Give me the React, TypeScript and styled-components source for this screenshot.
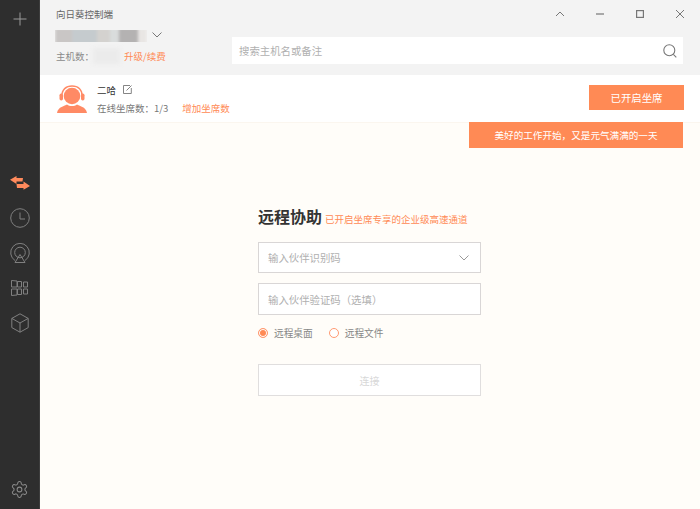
import React from "react";
import styled, { createGlobalStyle } from "styled-components";

const Global = createGlobalStyle`
  html, body { margin: 0; padding: 0; width: 700px; height: 509px; overflow: hidden; }
  body { font-family: "Noto Sans CJK SC", "Liberation Sans", sans-serif; }
  * { box-sizing: border-box; }
`;
const Shell = styled.div`display: flex; width: 700px; height: 509px; overflow: hidden;`;
const Sidebar = styled.nav`
  width: 40px; flex: none; background: #2e2e2e; display: flex; flex-direction: column; align-items: center;
  border-right: 1px solid #3d3d3d;
`;
const SideTop = styled.div`height: 38px; display: flex; align-items: center; justify-content: center; width: 100%;`;
const SideGroup = styled.div`margin-top: 127px; display: flex; flex-direction: column; align-items: center;`;
const SideSlot = styled.div`height: 35px; width: 40px; display: flex; align-items: center; justify-content: center;`;
const SideBottom = styled.div`margin-top: auto; height: 40px; display: flex; align-items: center; justify-content: center;`;
const Main = styled.div`flex: 1; min-width: 0; display: flex; flex-direction: column; background: #fffdf9; position: relative;`;
const Header = styled.header`height: 75px; flex: none; background: #f3f3f3; display: flex; flex-direction: column;`;
const TitleBar = styled.div`height: 27px; display: flex; align-items: center; justify-content: space-between; padding-left: 16px;`;
const Title = styled.span`font-size: 9.5px; color: #666;`;
const WinButtons = styled.div`display: flex; align-items: center; gap: 32px; padding-right: 16px;`;
const AccountRow = styled.div`display: flex; justify-content: space-between; padding: 0 17px 0 15px;`;
const Account = styled.div`display: flex; flex-direction: column; gap: 2px; width: 176px;`;
const NameLine = styled.div`display: flex; align-items: flex-start; gap: 5px; height: 20px;`;
const Blur = styled.div`
  width: 92px; height: 18px; margin-top: 1px; filter: blur(1.5px);
  background: linear-gradient(90deg, #c9c6c5 0 18%, #c5cbce 18% 46%, #d4d2cf 46% 60%, #d9dcdc 60% 70%, #b4b2b2 70% 90%, #e9e6e4 90%);
  clip-path: inset(2px 0 4px 0);
`;
const DownChevron = styled.svg`display: block; flex: none; margin-top: 5px;`;
const HostLine = styled.div`display: flex; align-items: center; font-size: 9.5px; color: #8a8a8a; height: 14px; padding-left: 1px;`;
const BlurCount = styled.span`width: 27px; height: 16px; margin: 0 4px 0 -1px; background: #ebebeb; filter: blur(2px);`;
const OrangeText = styled.span`color: #ff8a55;`;
const Search = styled.div`
  width: 451px; height: 27px; margin-top: 10px; background: #fff; display: flex; align-items: center; justify-content: space-between;
  padding: 0 6px 0 7px; font-size: 10.4px; color: #b0b0b0;
`;
const SeatRow = styled.section`
  height: 48px; flex: none; background: #fff; display: flex; align-items: center; justify-content: space-between;
  padding: 0 16px 0 17px; border-bottom: 1px solid #fbf6ef;
`;
const SeatLeft = styled.div`display: flex; align-items: center; gap: 10px;`;
const SeatInfo = styled.div`display: flex; flex-direction: column; gap: 4px;`;
const SeatName = styled.div`display: flex; align-items: center; gap: 7px; font-size: 9.5px; color: #333; height: 14px;`;
const SeatMeta = styled.div`display: flex; font-size: 9.5px; color: #777; gap: 14px; height: 14px; align-items: center;`;
const PrimaryButton = styled.button`
  width: 95px; height: 25px; border: 0; background: #ff8a55; color: #fff; font: inherit; font-size: 10.4px; padding: 0; margin-top: -2px;
`;
const Banner = styled.div`
  position: absolute; top: 122px; right: 17px; width: 214px; height: 26px; background: #ff8a55; color: #fff;
  font-size: 9.6px; display: flex; align-items: center; justify-content: center;
`;
const Content = styled.main`flex: 1; display: flex; flex-direction: column; align-items: flex-start; padding: 81px 0 0 218px;`;
const Heading = styled.div`display: flex; align-items: baseline; gap: 3px; height: 23px; white-space: nowrap;`;
const HeadingMain = styled.h1`margin: 0; font-size: 16px; font-weight: 700; color: #333;`;
const HeadingSub = styled.span`font-size: 9.5px; color: #ff8a55;`;
const Field = styled.div`
  width: 223px; height: 32px; background: #fff; border: 1px solid #d9d6d6; display: flex; align-items: center; justify-content: space-between;
  padding: 0 11px 0 9px; font-size: 10.4px; color: #b0b0b0; margin-top: 9px;
`;
const FirstField = styled(Field)`height: 31px; margin-top: 15px; margin-bottom: 1px;`;
const Radios = styled.div`display: flex; align-items: center; gap: 16px; margin-top: 10px; height: 16px;`;
const RadioItem = styled.label`display: flex; align-items: center; gap: 6px; font-size: 9.7px; color: #888;`;
const RadioDot = styled.span<{ $on?: boolean }>`
  width: 10px; height: 10px; border-radius: 50%; border: 1px solid #ff9a72; background: ${p => (p.$on ? "#ff8a55" : "#fff")};
  box-shadow: ${p => (p.$on ? "inset 0 0 0 1px #fff" : "none")};
`;
const Connect = styled.button`
  width: 223px; height: 32px; margin-top: 23px; background: #fff; border: 1px solid #e0dede; color: #d8d8d8; font: inherit; font-size: 10px; padding: 0;
`;

const Ic = styled.svg`display: block; flex: none;`;

export default function App() {
  return (
    <Shell>
      <Global />
      <Sidebar>
        <SideTop>
          <Ic width="14" height="14" viewBox="0 0 14 14" fill="none" stroke="#9a9a9a"><path d="M7 0.500v13M0.500 7h13" /></Ic>
        </SideTop>
        <SideGroup>
          <SideSlot>
            <Ic width="20" height="14" viewBox="0 0 20 14" fill="#ff8a5c">
              <path d="M0 3.800 6.500 0v2h6.500l-.5 3.500H6.500V8z" />
              <path d="M20 10 13.500 5.500v2.500H6.500l.5 4h6.500v1.800z" />
            </Ic>
          </SideSlot>
          <SideSlot>
            <Ic width="20" height="20" viewBox="0 0 20 20" fill="none" stroke="#808080"><circle cx="10" cy="10" r="9.300" /><path d="M10 4.500V11h5" /></Ic>
          </SideSlot>
          <SideSlot>
            <Ic width="20" height="20" viewBox="0 0 20 20" fill="none" stroke="#808080"><path d="M5 17.500A9.300 9.300 0 1 1 15 17.500" /><circle cx="10" cy="9.500" r="5.300" /><path d="M10 11.500 5 19.500h10z" /></Ic>
          </SideSlot>
          <SideSlot>
            <Ic width="17" height="16" viewBox="0 0 17 16" fill="none" stroke="#808080"><path d="M.5.500 6 1v6H.5zM6.500 1.500h4V7h-4zM12.500 2h4v5h-4zM.5 9H6v6l-5.500.5zM6.500 9h4v5.500h-4zM12.500 9h4v5h-4z" /></Ic>
          </SideSlot>
          <SideSlot>
            <Ic width="18" height="20" viewBox="0 0 18 20" fill="none" stroke="#808080"><path d="M9 .8 17.200 5.400v9.200L9 19.200.8 14.600V5.400zM.8 5.400 9 10l8.200-4.600M9 10v9.200" /></Ic>
          </SideSlot>
        </SideGroup>
        <SideBottom>
          <Ic width="19" height="19" viewBox="0 0 24 24" fill="none" stroke="#8a8a8a" strokeWidth="1.300">
            <path d="M12.220 2h-.44a2 2 0 0 0-2 2v.18a2 2 0 0 1-1 1.730l-.43.25a2 2 0 0 1-2 0l-.15-.08a2 2 0 0 0-2.730.73l-.22.38a2 2 0 0 0 .73 2.730l.15.1a2 2 0 0 1 1 1.720v.51a2 2 0 0 1-1 1.740l-.15.09a2 2 0 0 0-.73 2.730l.22.38a2 2 0 0 0 2.730.73l.15-.08a2 2 0 0 1 2 0l.43.25a2 2 0 0 1 1 1.730V20a2 2 0 0 0 2 2h.44a2 2 0 0 0 2-2v-.18a2 2 0 0 1 1-1.730l.43-.25a2 2 0 0 1 2 0l.15.08a2 2 0 0 0 2.730-.73l.22-.39a2 2 0 0 0-.73-2.730l-.15-.08a2 2 0 0 1-1-1.740v-.5a2 2 0 0 1 1-1.740l.15-.09a2 2 0 0 0 .73-2.730l-.22-.38a2 2 0 0 0-2.730-.73l-.15.08a2 2 0 0 1-2 0l-.43-.25a2 2 0 0 1-1-1.730V4a2 2 0 0 0-2-2z" />
            <circle cx="12" cy="12" r="3" />
          </Ic>
        </SideBottom>
      </Sidebar>
      <Main>
        <Header>
          <TitleBar>
            <Title>向日葵控制端</Title>
            <WinButtons>
              <Ic width="8" height="8" viewBox="0 0 8 8" fill="none" stroke="#777"><path d="M0 6 4 2l4 4" /></Ic>
              <Ic width="8" height="8" viewBox="0 0 8 8" fill="none" stroke="#777" strokeWidth="1.200"><path d="M0 4h8" /></Ic>
              <Ic width="8" height="8" viewBox="0 0 8 8" fill="none" stroke="#777" strokeWidth="1.200"><rect x=".6" y=".6" width="6.800" height="6.800" /></Ic>
              <Ic width="8" height="8" viewBox="0 0 8 8" fill="none" stroke="#777"><path d="M0 0l8 8M8 0l-8 8" /></Ic>
            </WinButtons>
          </TitleBar>
          <AccountRow>
            <Account>
              <NameLine>
                <Blur />
                <DownChevron width="10" height="6" viewBox="0 0 10 6" fill="none" stroke="#777"><path d="M.5.500 5 5 9.500.5" /></DownChevron>
              </NameLine>
              <HostLine>主机数：<BlurCount /><OrangeText>升级/续费</OrangeText></HostLine>
            </Account>
            <Search>
              <span>搜索主机名或备注</span>
              <Ic width="14" height="14" viewBox="0 0 14 14" fill="none" stroke="#777" strokeWidth="1.100"><circle cx="6.300" cy="6.300" r="5.500" /><path d="m10.300 10.300 3 3" /></Ic>
            </Search>
          </AccountRow>
        </Header>
        <SeatRow>
          <SeatLeft>
            <Ic width="30" height="28" viewBox="0 0 30 28" fill="#ff8a65">
              <path d="M4.800 11.500C4.800 4.500 9 1 15 1s10.200 3.500 10.200 10.500" fill="none" stroke="#ff8a65" strokeWidth="1.400" />
              <rect x="2.500" y="8.500" width="3.500" height="7" rx="1.700" />
              <rect x="24" y="8.500" width="3.500" height="7" rx="1.700" />
              <circle cx="15" cy="11" r="8.300" />
              <path d="M10 19.500c-2 1.500-9 2-10 8.500h30c-1-6.500-8-7-10-8.500-1.500 1-3 1.500-5 1.500s-3.500-.5-5-1.500z" />
            </Ic>
            <SeatInfo>
              <SeatName>
                <span>二哈</span>
                <Ic width="9" height="9" viewBox="0 0 9 9" fill="none" stroke="#777" strokeWidth=".9"><path d="M7 .5H.5v8h7.800V3M3.500 5.500 8.500.5" /></Ic>
              </SeatName>
              <SeatMeta>
                <span>在线坐席数：1/3</span>
                <OrangeText>增加坐席数</OrangeText>
              </SeatMeta>
            </SeatInfo>
          </SeatLeft>
          <PrimaryButton>已开启坐席</PrimaryButton>
        </SeatRow>
        <Banner>美好的工作开始，又是元气满满的一天</Banner>
        <Content>
          <Heading>
            <HeadingMain>远程协助</HeadingMain>
            <HeadingSub>已开启坐席专享的企业级高速通道</HeadingSub>
          </Heading>
          <FirstField>
            <span>输入伙伴识别码</span>
            <Ic width="10" height="6" viewBox="0 0 10 6" fill="none" stroke="#999"><path d="M.5.500 5 5 9.500.5" /></Ic>
          </FirstField>
          <Field><span>输入伙伴验证码（选填）</span></Field>
          <Radios>
            <RadioItem><RadioDot $on />远程桌面</RadioItem>
            <RadioItem><RadioDot />远程文件</RadioItem>
          </Radios>
          <Connect>连接</Connect>
        </Content>
      </Main>
    </Shell>
  );
}
